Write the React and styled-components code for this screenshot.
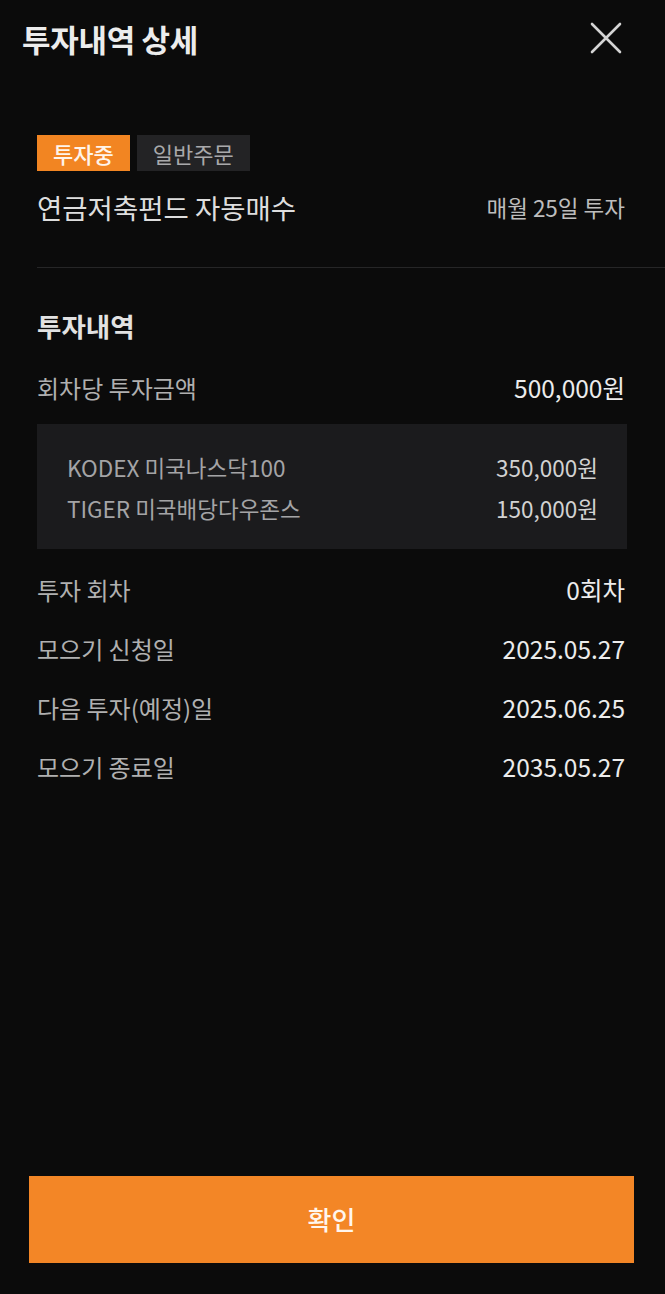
import React from "react";
import styled, { createGlobalStyle } from "styled-components";

const Global = createGlobalStyle`
  html, body { margin: 0; padding: 0; background: #0b0b0b; }
  body { font-family: "Noto Sans CJK KR", "Noto Sans", sans-serif; }
  * { box-sizing: border-box; }
`;

const Page = styled.div`
  width: 665px;
  min-height: 1294px;
  background: #0b0b0b;
  display: flex;
  flex-direction: column;
  color: #e4e4e4;
`;

const Header = styled.header`
  height: 76px;
  display: flex;
  align-items: center;
  justify-content: space-between;
  padding: 0 42px 0 22px;
`;

const Title = styled.h1`
  margin: 0;
  font-size: 31px;
  font-weight: 700;
  color: #ececec;
  letter-spacing: -0.3px;
`;

const CloseButton = styled.button`
  width: 34px;
  height: 34px;
  padding: 0;
  border: 0;
  background: transparent;
  display: flex;
  align-items: center;
  justify-content: center;
`;

const Content = styled.main`
  padding-top: 59px;
  display: flex;
  flex-direction: column;
`;

const Inset = styled.div`
  padding: 0 ${(p) => p.$right || 40}px 0 37px;
`;

const Badges = styled.div`
  display: flex;
  gap: 7px;
  height: 36px;
`;

const Badge = styled.span`
  display: inline-flex;
  align-items: center;
  justify-content: center;
  height: 36px;
  padding: 0 16px;
  font-size: 22px;
  font-weight: ${(p) => (p.$active ? 500 : 400)};
  color: ${(p) => (p.$active ? "#fff4ea" : "#a9a9ab")};
  background: ${(p) => (p.$active ? "#f28522" : "#232325")};
`;

const PlanRow = styled.div`
  margin-top: 18px;
  height: 36px;
  display: flex;
  align-items: center;
  justify-content: space-between;
`;

const PlanName = styled.span`
  font-size: 27.5px;
  color: #dedede;
`;

const PlanSchedule = styled.span`
  font-size: 22.5px;
  color: #bdbdbd;
`;

const Divider = styled.hr`
  margin: 42px 0 0 37px;
  border: 0;
  height: 1px;
  background: #262627;
`;

const SectionTitle = styled.h2`
  margin: 41px 0 0;
  height: 34px;
  line-height: 34px;
  font-size: 26.5px;
  font-weight: 700;
  color: #e2e2e2;
`;

const Row = styled.div`
  display: flex;
  align-items: center;
  justify-content: space-between;
  height: ${(p) => p.$h || 59}px;
`;

const Label = styled.span`
  font-size: 24px;
  color: #b0b0b0;
`;

const Value = styled.span`
  font-size: 24.5px;
  font-weight: 400;
  color: #ececec;
`;

const FirstRow = styled(Row)`
  margin-top: 22px;
`;

const Breakdown = styled.div`
  margin-top: 15px;
  background: #1b1b1d;
  padding: 22px 29px 21px 30px;
  display: flex;
  flex-direction: column;
`;

const SubLabel = styled.span`
  font-size: 22.5px;
  color: #a4a4a6;
`;

const SubValue = styled.span`
  font-size: 22.5px;
  color: #d2d2d2;
`;

const Details = styled.div`
  margin-top: 11px;
  display: flex;
  flex-direction: column;
`;

const Footer = styled.footer`
  margin-top: auto;
  padding: 0 31px 31px 29px;
`;

const ConfirmButton = styled.button`
  width: 100%;
  height: 87px;
  border: 0;
  background: #f38626;
  color: #fff6ee;
  font-family: inherit;
  font-size: 26px;
  font-weight: 500;
  padding: 0 0 3px;
`;

const items = [
  ["KODEX 미국나스닥100", "350,000원"],
  ["TIGER 미국배당다우존스", "150,000원"],
];

const details = [
  ["투자 회차", "0회차"],
  ["모으기 신청일", "2025.05.27"],
  ["다음 투자(예정)일", "2025.06.25"],
  ["모으기 종료일", "2035.05.27"],
];

export default function App() {
  return (
    <Page>
      <Global />
      <Header>
        <Title>투자내역 상세</Title>
        <CloseButton aria-label="닫기">
          <svg width="32" height="32" viewBox="0 0 32 32">
            <path
              d="M2 2 L30 30 M30 2 L2 30"
              stroke="#d4d4d4"
              strokeWidth="2.6"
              strokeLinecap="round"
            />
          </svg>
        </CloseButton>
      </Header>
      <Content>
        <Inset>
          <Badges>
            <Badge $active>투자중</Badge>
            <Badge>일반주문</Badge>
          </Badges>
          <PlanRow>
            <PlanName>연금저축펀드 자동매수</PlanName>
            <PlanSchedule>매월 25일 투자</PlanSchedule>
          </PlanRow>
        </Inset>
        <Divider />
        <Inset>
          <SectionTitle>투자내역</SectionTitle>
          <FirstRow $h={44}>
            <Label>회차당 투자금액</Label>
            <Value>500,000원</Value>
          </FirstRow>
        </Inset>
        <Inset $right={38}>
          <Breakdown>
            {items.map(([name, amount]) => (
              <Row key={name} $h={41}>
                <SubLabel>{name}</SubLabel>
                <SubValue>{amount}</SubValue>
              </Row>
            ))}
          </Breakdown>
        </Inset>
        <Inset>
          <Details>
            {details.map(([label, value]) => (
              <Row key={label}>
                <Label>{label}</Label>
                <Value>{value}</Value>
              </Row>
            ))}
          </Details>
        </Inset>
      </Content>
      <Footer>
        <ConfirmButton>확인</ConfirmButton>
      </Footer>
    </Page>
  );
}
